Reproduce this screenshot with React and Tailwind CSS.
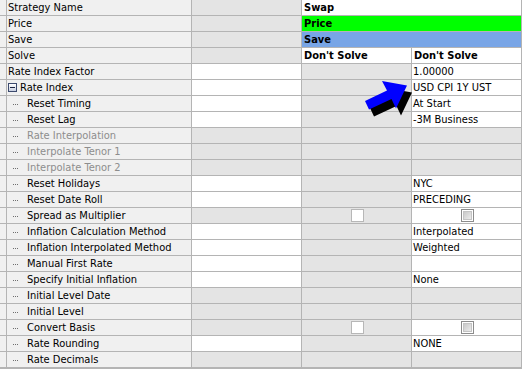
import React from "react";

const font = { fontFamily: '"DejaVu Sans Condensed", "Liberation Sans", sans-serif' };

// c2 / c3 / c4: "w" = editable (white), "g" = read-only (grey)
const rows = [
  { label: "Strategy Name", c2: "g", merged: { text: "Swap", bg: "bg-white" } },
  { label: "Price", c2: "g", merged: { text: "Price", bg: "bg-[#00ff00]" } },
  { label: "Save", c2: "g", merged: { text: "Save", bg: "bg-[#78a5e6]" } },
  { label: "Solve", c2: "g", c3: "w", c4: "w", v3: "Don't Solve", v4: "Don't Solve", bold: true },
  { label: "Rate Index Factor", c2: "w", c3: "g", c4: "w", v4: "1.00000" },
  { label: "Rate Index", node: true, c2: "w", c3: "g", c4: "w", v4: "USD CPI 1Y UST" },
  { label: "Reset Timing", child: true, c2: "w", c3: "g", c4: "w", v4: "At Start" },
  { label: "Reset Lag", child: true, c2: "w", c3: "g", c4: "w", v4: "-3M Business" },
  { label: "Rate Interpolation", child: true, disabled: true, c2: "g", c3: "g", c4: "g" },
  { label: "Interpolate Tenor 1", child: true, disabled: true, c2: "g", c3: "g", c4: "g" },
  { label: "Interpolate Tenor 2", child: true, disabled: true, c2: "g", c3: "g", c4: "g" },
  { label: "Reset Holidays", child: true, c2: "w", c3: "g", c4: "w", v4: "NYC" },
  { label: "Reset Date Roll", child: true, c2: "w", c3: "g", c4: "w", v4: "PRECEDING" },
  { label: "Spread as Multiplier", child: true, c2: "g", c3: "g", c4: "w", check: true },
  { label: "Inflation Calculation Method", child: true, c2: "w", c3: "g", c4: "w", v4: "Interpolated" },
  { label: "Inflation Interpolated Method", child: true, c2: "w", c3: "g", c4: "w", v4: "Weighted" },
  { label: "Manual First Rate", child: true, c2: "w", c3: "g", c4: "w" },
  { label: "Specify Initial Inflation", child: true, c2: "w", c3: "g", c4: "w", v4: "None" },
  { label: "Initial Level Date", child: true, c2: "g", c3: "g", c4: "g" },
  { label: "Initial Level", child: true, c2: "g", c3: "g", c4: "g" },
  { label: "Convert Basis", child: true, c2: "g", c3: "g", c4: "w", check: true },
  { label: "Rate Rounding", child: true, c2: "w", c3: "g", c4: "w", v4: "NONE" },
  { label: "Rate Decimals", child: true, c2: "g", c3: "g", c4: "g" },
];

const cellBg = (t) => (t === "w" ? "bg-white" : "bg-[#e4e4e4]");

const arrow = "365,101 387,90.5 382,81 407,85.5 396,108.5 391.5,99 369,109.5";

function TreeDots() {
  return (
    <span className="flex w-[19px] shrink-0 items-center gap-px pl-[5px] pt-[2px]">
      <span className="h-px w-px bg-[#6e6e6e]" />
      <span className="h-px w-px bg-[#6e6e6e]" />
      <span className="h-px w-px bg-[#6e6e6e]" />
    </span>
  );
}

function MinusBox() {
  return (
    <span className="mr-[3px] flex h-[9px] w-[9px] shrink-0 items-center justify-center border border-[#3c4a6e] bg-gradient-to-b from-white to-[#c8cfe0]">
      <span className="h-px w-[5px] bg-[#1c2440]" />
    </span>
  );
}

function OldCheck() {
  return <span className="block h-[13px] w-[13px] border border-[#b7b7b7] bg-white" />;
}

function GreyCheck() {
  return (
    <span className="flex h-[13px] w-[13px] items-center justify-center border border-[#8c8c8c] bg-white">
      <span className="block h-[9px] w-[9px] border border-[#c4c4c4] bg-gradient-to-br from-[#c9c9c9] to-[#ececec]" />
    </span>
  );
}

export default function App() {
  return (
    <div className="relative h-[369px] w-[522px] overflow-hidden bg-[#b4b4b4] text-[11px] leading-[15px] text-black" style={font}>
      <div className="grid auto-rows-[15px] grid-cols-[6px_184px_109px_109px_109px] gap-px pr-px pb-px">
        {rows.map((r, i) => (
          <React.Fragment key={i}>
            <div className="bg-[#f0f0f0]" />
            <div
              className={`flex items-center whitespace-nowrap bg-[#f0f0f0] pl-px ${
                r.disabled ? "text-[#8d8d8d]" : "text-black"
              }`}
            >
              {r.child && <TreeDots />}
              {r.node && <MinusBox />}
              <span>{r.label}</span>
            </div>
            <div className={cellBg(r.c2)} />
            {r.merged ? (
              <div className={`col-span-2 pl-[2px] font-bold ${r.merged.bg}`}>{r.merged.text}</div>
            ) : (
              <>
                <div className={`flex items-center pl-[2px] ${r.bold ? "font-bold" : ""} ${cellBg(r.c3)} ${r.check ? "justify-center pl-0" : ""}`}>
                  {r.check ? <OldCheck /> : r.v3}
                </div>
                <div className={`flex items-center whitespace-nowrap pl-[1px] ${r.bold ? "font-bold pl-[2px]" : ""} ${cellBg(r.c4)} ${r.check ? "justify-center pl-0" : ""}`}>
                  {r.check ? <GreyCheck /> : r.v4}
                </div>
              </>
            )}
          </React.Fragment>
        ))}
      </div>

      {/* pointer arrow over the Rate Index value */}
      <svg className="pointer-events-none absolute left-0 top-0" width="522" height="369">
        <g transform="translate(5 7)">
          <polygon points={arrow} fill="#000" />
        </g>
        <polygon points={arrow} fill="#0000ff" />
      </svg>
    </div>
  );
}
